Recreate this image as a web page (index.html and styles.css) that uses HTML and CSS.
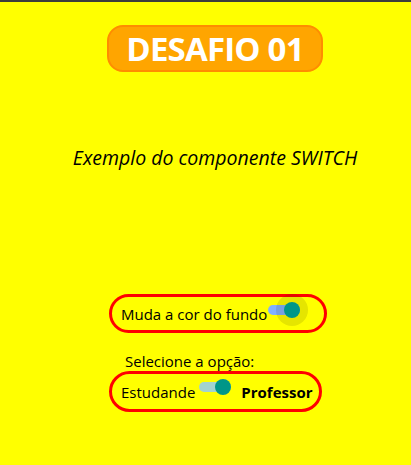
FILE: index.html
```html
<!DOCTYPE html>
<html lang="pt">
<head>
<meta charset="utf-8">
<title>Desafio 01</title>
<link rel="stylesheet" href="styles.css">
</head>
<body>
<div class="page">
  <div class="title">DESAFIO 01</div>
  <div class="subtitle">Exemplo do componente SWITCH</div>
  <div class="controls">
    <div class="box box-bg">
      <span class="label">Muda a cor do fundo</span>
      <span class="switch switch-bg">
        <span class="track track-blue"></span>
        <span class="thumb thumb-focus"></span>
      </span>
    </div>
    <div class="prompt">Selecione a opção:</div>
    <div class="box box-opt">
      <span class="label">Estudande</span>
      <span class="switch switch-opt">
        <span class="track track-teal"></span>
        <span class="thumb"></span>
      </span>
      <span class="label strong">Professor</span>
    </div>
  </div>
</div>
</body>
</html>
```
FILE: styles.css
```css
html, body {
  margin: 0;
  padding: 0;
}
body {
  background: #ffff00;
  border-top: 2px solid #3c3c3c;
  font-family: "Open Sans", "Noto Sans", sans-serif;
  color: #000;
  height: 463px;
  overflow: hidden;
}
.page {
  display: flex;
  flex-direction: column;
  align-items: center;
  padding-left: 19px;
}
.title {
  margin-top: 23px;
  width: 216px;
  height: 47px;
  box-sizing: border-box;
  background: #ffa500;
  border: 2px solid #ff8c00;
  border-radius: 16px;
  color: #fff;
  font-weight: 700;
  font-size: 33px;
  display: flex;
  align-items: center;
  justify-content: center;
  letter-spacing: -0.8px;
}
.subtitle {
  margin-top: 73px;
  font-style: italic;
  font-size: 19.5px;
  line-height: 26px;
}
.controls {
  align-self: flex-start;
  margin-left: 90px;
  margin-top: 123px;
  display: flex;
  flex-direction: column;
  align-items: flex-start;
}
.box {
  box-sizing: border-box;
  border: 3px solid #ff0000;
  border-radius: 22px;
  display: flex;
  align-items: center;
  padding-left: 9px;
}
.box-bg {
  width: 218px;
  height: 39px;
}
.box-opt {
  width: 213px;
  height: 41px;
}
.label {
  font-size: 15px;
  line-height: 20px;
}
.strong {
  font-weight: 700;
}
.prompt {
  margin-top: 18px;
  margin-left: 16px;
  font-size: 15px;
  line-height: 20px;
}
.switch {
  position: relative;
  width: 32px;
  height: 16px;
  flex: none;
}
.switch-bg {
  margin-left: 1px;
  margin-bottom: 8px;
}
.switch-opt {
  margin-left: 4px;
  margin-right: 10px;
  margin-bottom: 10px;
}
.track {
  position: absolute;
  left: 0;
  right: 0;
  top: 3px;
  height: 10px;
  border-radius: 5px;
}
.track-blue {
  background: #81b0ff;
}
.track-teal {
  background: #a3d3cf;
}
.thumb {
  position: absolute;
  right: 0;
  top: 0;
  width: 16px;
  height: 16px;
  border-radius: 50%;
  background: #009688;
}
.thumb-focus {
  box-shadow: 0 0 0 8px rgba(40, 40, 0, 0.12);
}
```
